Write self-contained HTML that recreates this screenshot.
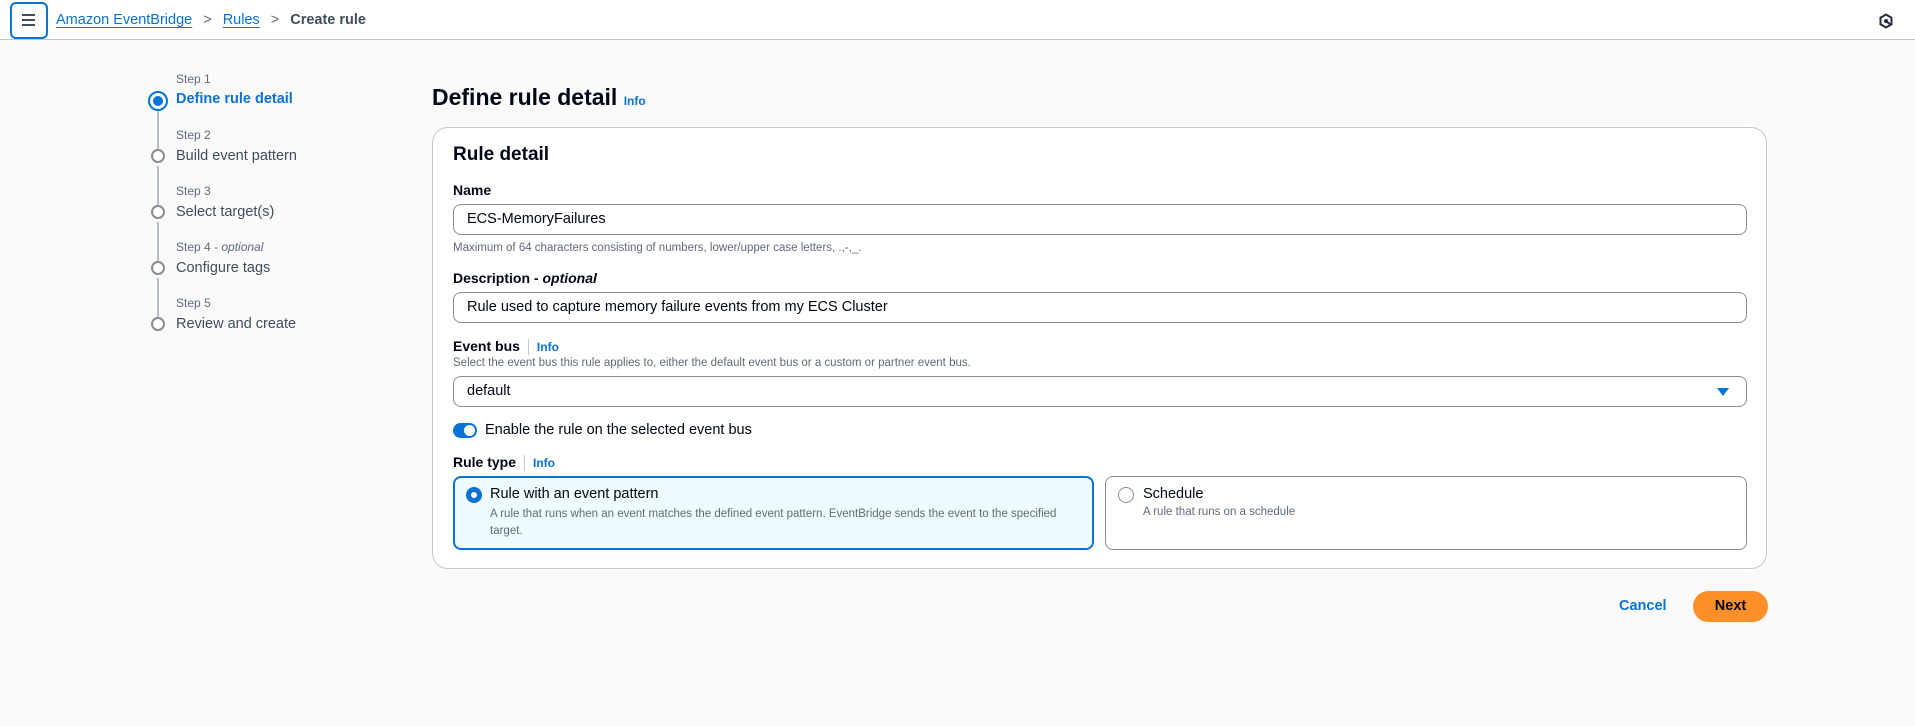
<!DOCTYPE html>
<html><head><meta charset="utf-8"><style>
*{box-sizing:border-box;margin:0;padding:0}
body{width:1915px;height:726px;background:#fafafa;font-family:"Liberation Sans",sans-serif;color:#000716;position:relative;overflow:hidden}
.a{position:absolute;white-space:nowrap}
.hdr{position:absolute;left:0;top:0;width:1915px;height:40px;background:#fff;border-bottom:1px solid #c6c6cd}
.lnk{color:#0972d3;text-decoration:underline;text-underline-offset:3px}
.stepS{font-size:12px;color:#5f6b7a}
.stepL{font-size:14.5px;color:#414d5c}
.circ{position:absolute;width:14px;height:14px;border:2px solid #8c8c94;border-radius:50%;background:#fff}
.vl{position:absolute;width:2px;background:#b6bec9;left:157px}
.inp{position:absolute;left:453px;width:1294px;height:31px;border:1px solid #8c8c94;border-radius:8px;background:#fff;font-size:14.5px;padding:6px 13px;color:#000716}
.lbl{font-size:14px;font-weight:bold;color:#000716}
.hint{font-size:11.5px;color:#5f6b7a}
.info{font-size:12px;font-weight:bold;color:#0972d3}
.sep{display:inline-block;width:1px;height:16px;background:#c6c6cd;vertical-align:middle;margin:0 8px}
</style></head><body>
<div class="hdr"></div>
<div class="a" style="left:10px;top:2px;width:38px;height:37px;border:2px solid #0972d3;border-radius:6px;background:#fff"></div>
<div class="a" style="left:22px;top:14px;width:13px;height:2px;background:#414d5c;box-shadow:0 5px 0 #414d5c,0 10px 0 #414d5c"></div>
<div class="a" style="left:56px;top:12px;font-size:14.5px"><span class="lnk">Amazon EventBridge</span><span style="color:#5f6b7a;margin:0 11px">&gt;</span><span class="lnk">Rules</span><span style="color:#5f6b7a;margin:0 11px">&gt;</span><span style="color:#414d5c;font-weight:bold">Create rule</span></div>
<svg class="a" style="left:1878px;top:13px" width="16" height="16" viewBox="0 0 16 16"><path d="M8 1.5 L13.5 4.7 V11.3 L8 14.5 L2.5 11.3 V4.7Z" fill="none" stroke="#232f3e" stroke-width="2"/><circle cx="8" cy="8" r="2" fill="#232f3e"/><path d="M9 9 L12 11" stroke="#232f3e" stroke-width="2"/></svg>

<!-- steps -->
<div class="vl" style="top:110px;height:45px"></div>
<div class="vl" style="top:166px;height:45px"></div>
<div class="vl" style="top:222px;height:45px"></div>
<div class="vl" style="top:278px;height:45px"></div>
<div class="a" style="left:148px;top:91px;width:20px;height:20px;border:2px solid #0972d3;border-radius:50%;background:#fff"></div>
<div class="a" style="left:153px;top:96px;width:10px;height:10px;border-radius:50%;background:#0972d3"></div>
<div class="circ" style="left:151px;top:149px"></div>
<div class="circ" style="left:151px;top:205px"></div>
<div class="circ" style="left:151px;top:261px"></div>
<div class="circ" style="left:151px;top:317px"></div>
<div class="a stepS" style="left:176px;top:72px">Step 1</div>
<div class="a" style="left:176px;top:91px;font-size:14.5px;font-weight:bold;color:#0972d3">Define rule detail</div>
<div class="a stepS" style="left:176px;top:128px">Step 2</div>
<div class="a stepL" style="left:176px;top:148px">Build event pattern</div>
<div class="a stepS" style="left:176px;top:184px">Step 3</div>
<div class="a stepL" style="left:176px;top:204px">Select target(s)</div>
<div class="a stepS" style="left:176px;top:240px">Step 4 - <i>optional</i></div>
<div class="a stepL" style="left:176px;top:260px">Configure tags</div>
<div class="a stepS" style="left:176px;top:296px">Step 5</div>
<div class="a stepL" style="left:176px;top:316px">Review and create</div>

<div class="a" style="left:432px;top:84px;font-size:23px;font-weight:bold">Define rule detail <span class="info" style="font-size:12px">Info</span></div>

<div class="a" style="left:432px;top:127px;width:1335px;height:442px;background:#fff;border:1px solid #c6c6cd;border-radius:16px"></div>
<div class="a" style="left:453px;top:144px;font-size:19px;font-weight:bold">Rule detail</div>

<div class="a lbl" style="left:453px;top:182px">Name</div>
<div class="inp" style="top:204px">ECS-MemoryFailures</div>
<div class="a hint" style="left:453px;top:242px">Maximum of 64 characters consisting of numbers, lower/upper case letters, .,-,_.</div>

<div class="a lbl" style="left:453px;top:270px">Description - <i>optional</i></div>
<div class="inp" style="top:292px">Rule used to capture memory failure events from my ECS Cluster</div>

<div class="a lbl" style="left:453px;top:338px">Event bus<span class="sep"></span><span class="info">Info</span></div>
<div class="a hint" style="left:453px;top:357px">Select the event bus this rule applies to, either the default event bus or a custom or partner event bus.</div>
<div class="inp" style="top:376px">default</div>
<svg class="a" style="left:1717px;top:387px" width="12" height="10"><path d="M0 1 H12 L6 9Z" fill="#0972d3"/></svg>

<div class="a" style="left:453px;top:423px;width:24px;height:15px;border-radius:8px;background:#0972d3"></div>
<div class="a" style="left:464px;top:425px;width:11px;height:11px;border-radius:50%;background:#fff"></div>
<div class="a" style="left:485px;top:422px;font-size:14.5px;color:#000716">Enable the rule on the selected event bus</div>

<div class="a lbl" style="left:453px;top:454px">Rule type<span class="sep"></span><span class="info">Info</span></div>

<div class="a" style="left:453px;top:476px;width:641px;height:74px;border:2px solid #0972d3;border-radius:8px;background:#f0fbff"></div>
<div class="a" style="left:466px;top:487px;width:16px;height:16px;border:5px solid #0972d3;border-radius:50%;background:#fff"></div>
<div class="a" style="left:490px;top:486px;font-size:14.5px">Rule with an event pattern</div>
<div class="a hint" style="left:490px;top:506px;line-height:17px;white-space:normal;width:590px;color:#5f6b7a">A rule that runs when an event matches the defined event pattern. EventBridge sends the event to the specified target.</div>

<div class="a" style="left:1105px;top:476px;width:642px;height:74px;border:1px solid #8c8c94;border-radius:8px;background:#fff"></div>
<div class="a" style="left:1118px;top:487px;width:16px;height:16px;border:1.5px solid #8c8c94;border-radius:50%;background:#fff"></div>
<div class="a" style="left:1143px;top:486px;font-size:14.5px">Schedule</div>
<div class="a hint" style="left:1143px;top:506px">A rule that runs on a schedule</div>

<div class="a" style="left:1619px;top:598px;font-size:14.5px;font-weight:bold;color:#0972d3">Cancel</div>
<div class="a" style="left:1693px;top:591px;width:75px;height:31px;border-radius:16px;background:#ff9029;font-size:14.5px;font-weight:bold;text-align:center;line-height:31px;color:#000716">Next</div>
</body></html>
